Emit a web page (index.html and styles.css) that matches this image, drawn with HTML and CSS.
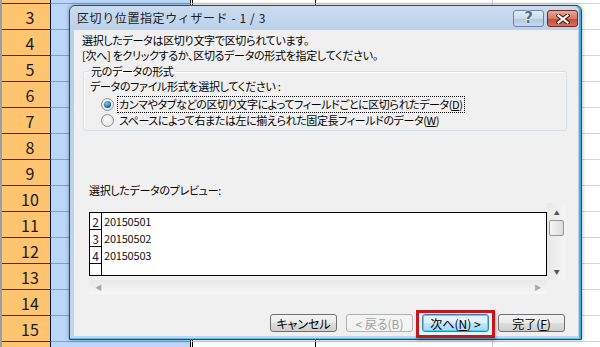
FILE: index.html
```html
<!DOCTYPE html>
<html lang="ja">
<head>
    <meta charset="UTF-8">
    <meta name="viewport" content="width=device-width, initial-scale=1.0">
    <title>区切り位置指定ウィザード</title>
    <link rel="stylesheet" href="styles.css">
</head>
<body>

    <div class="sheet">
        <div class="row"><span class="hd"></span><span class="ca"></span><span class="cb"></span><span class="cc"></span><span class="cd"></span></div>
        <div class="row"><span class="hd">3</span><span class="ca"></span><span class="cb"></span><span class="cc"></span><span class="cd"></span></div>
        <div class="row"><span class="hd">4</span><span class="ca"></span><span class="cb"></span><span class="cc"></span><span class="cd"></span></div>
        <div class="row"><span class="hd">5</span><span class="ca"></span><span class="cb"></span><span class="cc"></span><span class="cd"></span></div>
        <div class="row"><span class="hd">6</span><span class="ca"></span><span class="cb"></span><span class="cc"></span><span class="cd"></span></div>
        <div class="row"><span class="hd">7</span><span class="ca"></span><span class="cb"></span><span class="cc"></span><span class="cd"></span></div>
        <div class="row"><span class="hd">8</span><span class="ca"></span><span class="cb"></span><span class="cc"></span><span class="cd"></span></div>
        <div class="row"><span class="hd">9</span><span class="ca"></span><span class="cb"></span><span class="cc"></span><span class="cd"></span></div>
        <div class="row"><span class="hd">10</span><span class="ca"></span><span class="cb"></span><span class="cc"></span><span class="cd"></span></div>
        <div class="row"><span class="hd">11</span><span class="ca"></span><span class="cb"></span><span class="cc"></span><span class="cd"></span></div>
        <div class="row"><span class="hd">12</span><span class="ca"></span><span class="cb"></span><span class="cc"></span><span class="cd"></span></div>
        <div class="row"><span class="hd">13</span><span class="ca"></span><span class="cb"></span><span class="cc"></span><span class="cd"></span></div>
        <div class="row"><span class="hd">14</span><span class="ca"></span><span class="cb"></span><span class="cc"></span><span class="cd"></span></div>
        <div class="row"><span class="hd">15</span><span class="ca"></span><span class="cb"></span><span class="cc"></span><span class="cd"></span></div>
        <div class="row"><span class="hd"></span><span class="ca"></span><span class="cb"></span><span class="cc"></span><span class="cd"></span></div>
    </div>

    <!-- the wizard window sits over the worksheet -->
    <div class="wizard">
        <div class="titlebar">
            <span class="title">区切り位置指定ウィザード - 1 / 3</span>
            <div class="caption-buttons">
                <span class="cap help">?</span>
                <span class="cap close">
                    <svg width="14" height="10" viewBox="0 0 14 10">
                        <path d="M2.5 1.5 L11.5 8.5 M11.5 1.5 L2.5 8.5" stroke="#4e1a13" stroke-width="4.2" stroke-linecap="square"/>
                        <path d="M2.5 1.5 L11.5 8.5 M11.5 1.5 L2.5 8.5" stroke="#fff" stroke-width="2.2" stroke-linecap="square"/>
                    </svg>
                </span>
            </div>
        </div>

        <div class="body">
            <p class="intro">選択したデータは区切り文字で区切られています。<br>[次へ] をクリックするか、区切るデータの形式を指定してください。</p>

            <fieldset class="group">
                <legend>元のデータの形式</legend>
                <p class="ask">データのファイル形式を選択してください :</p>
                <label class="radio"><span class="dot checked"></span><span class="focus">カンマやタブなどの区切り文字によってフィールドごとに区切られたデータ(<u>D</u>)</span></label>
                <label class="radio"><span class="dot"></span><span class="plain">スペースによって右または左に揃えられた固定長フィールドのデータ(<u>W</u>)</span></label>
            </fieldset>

            <p class="preview-label">選択したデータのプレビュー:</p>

            <div class="preview">
                <div class="grid">
                    <div class="line"><span class="num">2</span><span class="val">20150501</span></div>
                    <div class="line"><span class="num">3</span><span class="val">20150502</span></div>
                    <div class="line"><span class="num">4</span><span class="val">20150503</span></div>
                    <div class="line last"><span class="num"></span><span class="val"></span></div>
                </div>
                <div class="vscroll">
                    <span class="arrow">&#9650;</span>
                    <span class="thumb"></span>
                    <span class="arrow down">&#9660;</span>
                </div>
                <div class="hscroll">
                    <span class="arrow">&#9664;</span>
                    <span class="arrow">&#9654;</span>
                </div>
            </div>

            <div class="actions">
                <button class="btn">キャンセル</button>
                <button class="btn" disabled>&lt; 戻る(B)</button>
                <span class="mark"><button class="btn default">次へ(<u>N</u>) &gt;</button></span>
                <button class="btn">完了(<u>F</u>)</button>
            </div>
        </div>
    </div>

</body>
</html>
```

FILE: styles.css
```css
body {
    margin: 0;
    width: 600px;
    height: 347px;
    overflow: hidden;
    position: relative;
    background-color: #fff;
    font-family: "Noto Sans CJK JP", "Noto Sans", sans-serif;
    color: #000;
}

/* worksheet behind the dialog */
.sheet {
    margin-top: -22px;
    height: 369px;
    overflow: hidden;
}
.row {
    display: flex;
    height: 26px;
    border-left: 2px solid #9aa0a8;
}
.row span {
    box-sizing: border-box;
    height: 26px;
    border-bottom: 1px solid #d0d7e5;
}
.hd {
    width: 49px;
    background-color: #ffc46f;
    border-right: 1px solid #0c1533;
    border-bottom-color: #1d2f90 !important;
    font-size: 16px;
    line-height: 26px;
    text-align: center;
    padding-left: 8px;
    color: #1b1b1b;
}
.ca {
    width: 140px;
    background-color: #bbd8fb;
    border-right: 1px solid #000;
    border-bottom-color: #7e9fd2 !important;
}
.cb {
    width: 124px;
    margin-left: 1px;
    border-left: 1px solid #000;
    border-right: 1px solid #000;
}
.cc {
    width: 177px;
    border-right: 1px solid #c6ccd6;
}
.cd {
    flex: 1;
}

/* dialog window */
.wizard {
    position: absolute;
    left: 69px;
    top: 5px;
    width: 513px;
    height: 335px;
    box-sizing: border-box;
    border: 1px solid #36465a;
    border-radius: 6px 6px 0 0;
    padding: 0 3px 3px 4px;
    background: linear-gradient(#cbdcf0, #b8cee8 30px, #c2d5ec);
    box-shadow: inset -2px 0 0 #3fb0e4, inset 0 -1px 0 #5ec2ec, 0 0 4px rgba(0, 0, 0, 0.35);
    display: flex;
    flex-direction: column;
}
.titlebar {
    height: 24px;
    display: flex;
    justify-content: space-between;
    align-items: flex-start;
}
.title {
    font-size: 12px;
    line-height: 24px;
    letter-spacing: 0.6px;
    padding-left: 3px;
    color: #1a2029;
}
.caption-buttons {
    display: flex;
    gap: 3px;
    padding-top: 4px;
}
.cap {
    box-sizing: border-box;
    width: 31px;
    height: 17px;
    border-radius: 3px;
    display: flex;
    align-items: center;
    justify-content: center;
}
.help {
    border: 1px solid #6886ab;
    background: linear-gradient(#e3edf8, #c9dbef 50%, #b1c9e4 51%, #c6d9ee);
    color: #5a6b84;
    font-family: "DejaVu Sans", sans-serif;
    font-weight: bold;
    font-size: 15px;
    line-height: 15px;
    text-shadow: 0 0 2px #fff, 0 0 1px #fff, 0 0 1px #fff;
}
.close {
    border: 1px solid #6d2a22;
    background: linear-gradient(#e9a899, #d77966 50%, #c54a34 51%, #d5715c);
}

.body {
    flex: 1;
    background-color: #f0f0f0;
    padding: 3px 10px 4px 8px;
    display: flex;
    flex-direction: column;
    font-size: 11px;
    line-height: 15px;
    letter-spacing: -0.3px;
    font-feature-settings: "palt";
}
.intro {
    margin: 0;
}
.group {
    margin: 1px 1px 0 1px;
    padding: 0 6px 2px 6px;
    border: 1px solid #d5dfe5;
    border-radius: 3px;
    box-shadow: inset 1px 1px 0 #fff;
}
.group legend {
    padding: 0 2px;
    margin-left: -1px;
}
.ask {
    margin: 0 0 2px 0;
}
.radio {
    display: flex;
    align-items: center;
    height: 16px;
    padding-left: 11px;
    gap: 2px;
}
.dot {
    box-sizing: border-box;
    width: 13px;
    height: 13px;
    border-radius: 50%;
    border: 1px solid #8c8f92;
    background: radial-gradient(circle at 40% 35%, #ffffff, #dcdcdc);
    display: flex;
    align-items: center;
    justify-content: center;
}
.dot.checked::after {
    content: "";
    width: 7px;
    height: 7px;
    border-radius: 50%;
    background: radial-gradient(circle at 40% 35%, #8fd0f5, #1f66b0 60%, #163f7a);
}
.focus {
    border: 1px dotted #000;
    padding: 0 1px;
    margin-left: 1px;
    letter-spacing: -0.4px;
}
.plain {
    padding: 0 2px;
    margin-left: 1px;
    letter-spacing: -0.4px;
}

.preview-label {
    margin: 52px 0 0 7px;
}
.preview {
    margin: 5px 2px 0 7px;
    display: grid;
    grid-template-columns: 458px 19px;
    grid-template-rows: 77px 14px;
}
.grid {
    margin-top: 9px;
    height: 64px;
    box-sizing: border-box;
    border: 1px solid #000;
    background-color: #fff;
    display: flex;
    flex-direction: column;
}
.line {
    display: flex;
    height: 17px;
}
.line.last {
    flex: 1;
}
.num {
    box-sizing: border-box;
    width: 12px;
    border-right: 1px solid #000;
    border-bottom: 1px solid #000;
    font-size: 12px;
    line-height: 17px;
    text-align: center;
    letter-spacing: 0;
    color: #1a1a4a;
}
.line.last .num {
    border-bottom: none;
}
.val {
    padding-left: 2px;
    font-size: 11px;
    line-height: 17px;
    letter-spacing: -0.2px;
    color: #111;
}
.vscroll {
    background: linear-gradient(90deg, #e8e8e8, #f5f5f5);
    display: flex;
    flex-direction: column;
    align-items: center;
}
.vscroll .arrow {
    font-size: 6px;
    line-height: 8px;
    color: #555;
    margin-top: 6px;
}
.vscroll .down {
    margin-top: auto;
    margin-bottom: 4px;
}
.thumb {
    box-sizing: border-box;
    width: 15px;
    height: 16px;
    margin-top: 3px;
    border: 1px solid #989898;
    border-radius: 2px;
    background: linear-gradient(90deg, #f4f4f4, #dcdcdc);
}
.hscroll {
    background: linear-gradient(#e9e9e9, #f6f6f6);
    display: flex;
    justify-content: space-between;
    align-items: center;
    padding: 0 6px;
}
.hscroll .arrow {
    font-size: 7px;
    color: #a8a8a8;
}

.actions {
    margin-top: auto;
    margin-right: 3px;
    display: flex;
    align-items: flex-start;
    justify-content: flex-end;
    gap: 9px;
}
.btn {
    box-sizing: border-box;
    width: 67px;
    height: 18px;
    padding: 0;
    border: 1px solid #707070;
    border-radius: 3px;
    background: linear-gradient(#f3f3f3, #ebebeb 50%, #dddddd 51%, #cfcfcf);
    font-family: "Noto Sans CJK JP", sans-serif;
    font-size: 12px;
    line-height: 15px;
    font-feature-settings: "palt";
    color: #000;
}
.btn:disabled {
    border-color: #adb2b5;
    background: #f4f4f4;
    color: #a0a0a0;
}
.btn.default {
    border-color: #3c7fb1;
    background: linear-gradient(#eaf6fd, #d9f0fc 50%, #bee6fd 51%, #a7d9f5);
    box-shadow: inset 0 0 0 1px #48d7fb;
}
/* red annotation frame around the next button */
.mark {
    display: flex;
    margin: -4px -6px -6px -6px;
    padding: 1px 3px 3px 3px;
    border: 3px solid #c4161f;
    box-shadow: 1px 2px 3px rgba(0, 0, 0, 0.3);
}
```
